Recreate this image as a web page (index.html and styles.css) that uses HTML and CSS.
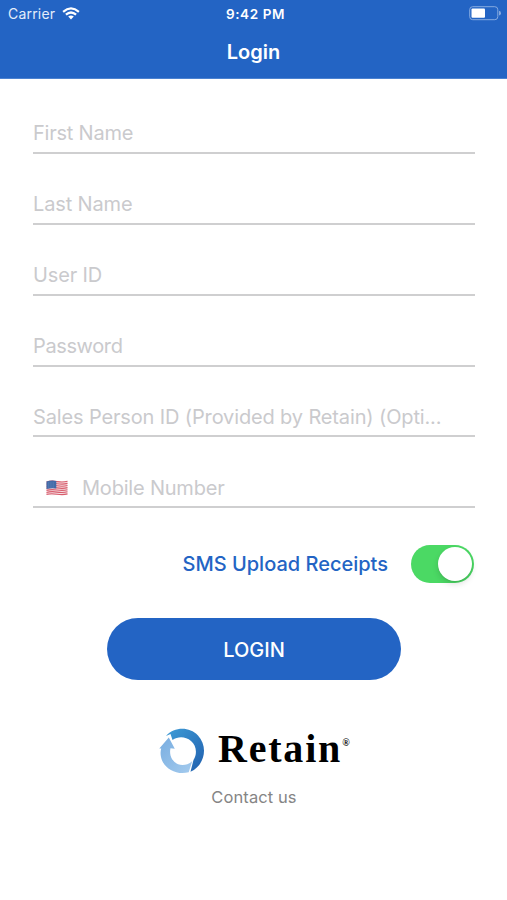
FILE: index.html
```html
<!DOCTYPE html>
<html lang="en">
<head>
<meta charset="utf-8">
<title>Login</title>
<link rel="stylesheet" href="styles.css">
</head>
<body>
<header class="header">
  <div class="status">
    <div class="carrier"><span>Carrier</span>
      <svg class="wifi" width="18" height="13" viewBox="0 0 18 13" fill="none" stroke="#fff" stroke-width="2.2"><path d="M1.1 4.8Q9-2 16.900 4.800"/><path d="M3.900 7.700Q9 3.300 14.100 7.700"/><path d="M6.200 9.600Q9 7.500 11.800 9.600L9 12.500Z" fill="#fff" stroke="none"/></svg>
    </div>
    <div class="time">9:42 PM</div>
    <svg class="battery" width="32" height="15" viewBox="0 0 32 15"><rect x=".7" y=".7" width="28.100" height="13" rx="3" fill="none" stroke="#86aae0" stroke-width="1"/><rect x="2.500" y="2.500" width="13.500" height="9.300" rx="1" fill="#fff"/><path d="M30 4.800Q32 5.300 32 7.200Q32 9.100 30 9.600Z" fill="#86aae0"/></svg>
  </div>
  <h1 class="title">Login</h1>
</header>
<main class="form">
  <div class="field"><span class="first">First Name</span></div>
  <div class="field"><span class="last">Last Name</span></div>
  <div class="field"><span class="user">User ID</span></div>
  <div class="field"><span class="password">Password</span></div>
  <div class="field"><span class="sales">Sales Person ID (Provided by Retain) (Opti...</span></div>
  <div class="field phone">
    <svg class="flag" width="22" height="16" viewBox="0 0 22 16"><path d="M.5 1.500Q5 0 11 1T21.500.7V14.500Q17 13.700 11 14.700T.5 14.800Z" fill="#f5dfe3"/><g fill="none" stroke="#d85c6c" stroke-width="1.150"><path d="M.5 2Q5 .6 11 1.600T21.500 1.300"/><path d="M.5 4.100Q5 2.700 11 3.700T21.500 3.400"/><path d="M.5 6.200Q5 4.800 11 5.800T21.500 5.500"/><path d="M.5 8.300Q5 6.900 11 7.900T21.500 7.600"/><path d="M.5 10.400Q5 9 11 10T21.500 9.700"/><path d="M.5 12.500Q5 11.100 11 12.100T21.500 11.800"/><path d="M.5 14.400Q5 13.200 11 14.200T21.500 13.900"/></g><path d="M.5 1.500Q5 .1 10.300.9V8.400Q5 7.700.5 8.900Z" fill="#416aa8"/><path d="M2 3H9M2 5H9M2 7H9" stroke="#7f9fcb" stroke-width=".7" stroke-dasharray=".7 1.100"/></svg>
    <span class="mobile">Mobile Number</span>
  </div>
  <div class="sms"><span class="sms-label">SMS Upload Receipts</span><div class="switch"><div class="knob"></div></div></div>
  <div class="button"><span>LOGIN</span></div>
</main>
<footer class="footer">
  <div class="brand">
    <svg class="mark" width="46" height="46" viewBox="0 0 46 46">
      <defs>
        <linearGradient id="dark" x1="0" y1="0" x2="1" y2="1"><stop offset="0" stop-color="#3f9dd7"/><stop offset="1" stop-color="#205fae"/></linearGradient>
        <linearGradient id="light" x1="0" y1="0" x2="1" y2="1"><stop offset="0" stop-color="#78ade0"/><stop offset="1" stop-color="#a4cbee"/></linearGradient>
      </defs>
      <path d="M7 8C15-1 30-2 39 7.500C49 18 46.500 37 31.500 43.800L34.500 32C38.500 26 37.500 17.500 32 13C26.500 8.300 19 8.200 13.500 12L11.500 6Z" fill="url(#dark)"/>
      <path d="M9.800 9.500L15.800 20.800L11.500 20.300C9.500 29 15 36.800 23.500 37C27.500 37 31 35.500 33.300 33L29.700 44.300C17 47.500 4.500 40.500 2 29C1.300 25.500 1.500 23 2.200 20.500L.3 20.500Z" fill="url(#light)"/>
    </svg>
    <span class="name">Retain</span><span class="reg">®</span>
  </div>
  <div class="contact">Contact us</div>
</footer>
</body>
</html>
```
FILE: styles.css
```css
* { box-sizing: border-box; }
body { margin: 0; height: 900px; background: #fff; font-family: Inter, sans-serif; overflow: hidden; }
.header { height: 79px; background: #2364c4; color: #fff; border-bottom: 1px solid #4b82d1; }
.status { height: 28px; padding: 0 6px 0 8px; display: grid; grid-template-columns: 1fr auto 1fr; align-items: center; font-size: 14px; line-height: 28px; }
.carrier { display: flex; align-items: center; gap: 6.5px; color: #e4edfa; }
.carrier span { letter-spacing: .2px; }
.wifi { margin-top: -1px; }
.time { font-weight: 600; font-size: 13.5px; letter-spacing: .6px; margin-left: 2px; }
.battery { justify-self: end; margin-top: -1px; }
.title { margin: 10px 0 0; text-align: center; font-size: 20px; line-height: 29px; font-weight: 600; }
.form { padding: 4px 32px 0 33px; }
.field { height: 70.9px; border-bottom: 2px solid #cfcfd0; padding-top: 35.4px; font-size: 20px; line-height: 30px; color: #cacacd; white-space: nowrap; display: flex; }
.first { letter-spacing: -.22px; }
.last { letter-spacing: -.15px; }
.user { letter-spacing: -.15px; }
.password { letter-spacing: -.38px; }
.sales { letter-spacing: -.14px; }
.mobile { letter-spacing: -.2px; }
.phone { padding-left: 13px; }
.flag { margin: 7px 14px 0 0; }
.sms { margin-top: 36.3px; height: 39px; display: flex; justify-content: flex-end; align-items: center; gap: 23px; color: #2364c4; font-size: 20px; font-weight: 500; }
.switch { width: 63px; height: 38px; border-radius: 19px; background: #4bd964; padding: 2px; display: flex; justify-content: flex-end; margin-right: 1px; }
.knob { width: 34px; height: 34px; border-radius: 50%; background: #fff; box-shadow: 0 3px 6px #0002, 0 1px 1px #0001; }
.button { width: 294px; height: 62px; margin: 34.7px 0 0 74px; border-radius: 31px; background: #2364c4; color: #fff; display: flex; align-items: center; justify-content: center; font-size: 20px; font-weight: 500; padding-top: 2px; }
.footer { margin-top: 48px; }
.brand { height: 46px; display: flex; align-items: flex-start; padding-left: 159px; }
.name { margin-left: 13px; font: bold 40px/42px "Liberation Serif", serif; letter-spacing: 1.8px; color: #000; }
.reg { font: bold 10px/30px "Liberation Serif", serif; color: #000; }
.contact { margin-top: 11px; padding-left: 1px; text-align: center; color: #858585; font-size: 16.5px; line-height: 24px; letter-spacing: .1px; }
```
